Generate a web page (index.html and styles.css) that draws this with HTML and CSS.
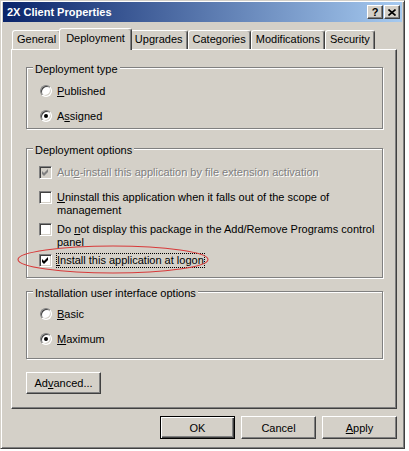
FILE: index.html
```html
<!DOCTYPE html>
<html>
    <head>
        <meta charset="utf-8">
        <title>2X Client Properties</title>
        <link rel="stylesheet" href="styles.css">
    </head>
    <body>
        <div class="window">
            <div class="titlebar">
                <span class="title">2X Client Properties</span>
                <div class="caption">
                    <span class="cbtn">?</span>
                    <span class="cbtn">
                        <svg width="8" height="7" viewBox="0 0 8 7"><path d="M0.5 0.5 L7.5 6.5 M7.5 0.5 L0.5 6.5" stroke="#000" stroke-width="1.6" fill="none"/></svg>
                    </span>
                </div>
            </div>
            <div class="content">
                <div class="tabs">
                    <div class="tab">General</div>
                    <div class="tab active">Deployment</div>
                    <div class="tab">Upgrades</div>
                    <div class="tab">Categories</div>
                    <div class="tab">Modifications</div>
                    <div class="tab">Security</div>
                </div>
                <div class="panel">
                    <div class="group g1">
                        <span class="legend">Deployment type</span>
                        <div class="opt first"><span class="radio"></span><span><u>P</u>ublished</span></div>
                        <div class="opt"><span class="radio on"></span><span>A<u>s</u>signed</span></div>
                    </div>
                    <div class="group g2">
                        <span class="legend">Deployment options</span>
                        <div class="opt first disabled">
                            <span class="check"><svg width="9" height="9" viewBox="0 0 9 9"><polygon points="1,3 3,5 7,1 7,4 3,8 1,6"/></svg></span>
                            <span>Aut<u>o</u>-install this application by file extension activation</span>
                        </div>
                        <div class="opt"><span class="check"></span><span><u>U</u>ninstall this application when it falls out of the scope of<br>management</span></div>
                        <div class="opt tight"><span class="check"></span><span>Do <u>n</u>ot display this package in the Add/Remove Programs control<br>panel</span></div>
                        <div class="opt tight">
                            <span class="check"><svg width="9" height="9" viewBox="0 0 9 9"><polygon points="1,3 3,5 7,1 7,4 3,8 1,6"/></svg></span>
                            <span class="focus"><u>I</u>nstall this application at logon</span>
                        </div>
                    </div>
                    <div class="group g3">
                        <span class="legend">Installation user interface options</span>
                        <div class="opt first"><span class="radio"></span><span><u>B</u>asic</span></div>
                        <div class="opt"><span class="radio on"></span><span><u>M</u>aximum</span></div>
                    </div>
                    <button class="btn advanced">Ad<u>v</u>anced...</button>
                </div>
                <div class="actions">
                    <button class="btn default">OK</button>
                    <button class="btn">Cancel</button>
                    <button class="btn"><u>A</u>pply</button>
                </div>
            </div>
            <!-- red highlight drawn over the dialog -->
            <svg class="mark" width="193" height="30" viewBox="0 0 193 30">
                <ellipse cx="96" cy="14.5" rx="95" ry="13.5" fill="none" stroke="#d83a3a" stroke-width="1.1"/>
            </svg>
        </div>
    </body>
</html>
```
FILE: styles.css
```css
*, ::after, ::before {
    box-sizing: border-box;
}
body {
    margin: 0;
    background: #fff;
    font-family: "Liberation Sans", Arial, sans-serif;
    font-size: 11px;
    color: #000;
}
.window {
    position: relative;
    width: 405px;
    height: 449px;
    padding: 1px 2px 2px 2px;
    background: #d4d0c8;
    border: 1px solid;
    border-color: #d4d0c8 #404040 #404040 #d4d0c8;
    box-shadow: inset 1px 1px #fff, inset -1px -1px #808080;
}
.titlebar {
    height: 20px;
    display: flex;
    align-items: center;
    justify-content: space-between;
    padding: 0 2px 0 4px;
    background: linear-gradient(to right, #0a246a, #a6caf0);
    color: #fff;
    font-weight: bold;
}
.caption {
    display: flex;
    gap: 1px;
}
.cbtn {
    width: 16px;
    height: 14px;
    display: flex;
    align-items: center;
    justify-content: center;
    background: #d4d0c8;
    color: #000;
    font-size: 11px;
    border: 1px solid;
    border-color: #fff #404040 #404040 #fff;
    box-shadow: inset -1px -1px #808080;
}
.content {
    padding: 6px 0 0 8px;
}
.tabs {
    display: flex;
    align-items: flex-end;
    height: 21px;
    padding-left: 1px;
}
.tab {
    height: 19px;
    padding: 0 4px;
    line-height: 17px;
    border: 1px solid;
    border-bottom: 0;
    border-color: #fff #404040 transparent #fff;
    box-shadow: inset -1px 0 #808080;
    border-radius: 3px 3px 0 0;
    white-space: nowrap;
}
.tab.active {
    position: relative;
    z-index: 1;
    height: 22px;
    margin: 0 -2px -1px -2px;
    padding: 0 6px;
    line-height: 18px;
    background: #d4d0c8;
}
.panel {
    width: 386px;
    height: 360px;
    padding: 0 13px 0 14px;
    border: 1px solid;
    border-color: #fff #404040 #404040 #fff;
    box-shadow: inset -1px -1px #808080;
}
.group {
    border: 1px solid #808080;
    box-shadow: inset 1px 1px #fff, 1px 1px #fff;
}
.legend {
    display: table;
    margin: -5px 0 0 6px;
    padding: 0 2px;
    line-height: 13px;
    background: #d4d0c8;
}
.g1 {
    margin-top: 17px;
    padding-bottom: 5px;
}
.g2 {
    margin-top: 19px;
    padding-bottom: 10px;
}
.g3 {
    margin-top: 13px;
    padding-bottom: 12px;
}
.opt {
    display: flex;
    align-items: flex-start;
    margin: 12px 0 0 12px;
    line-height: 13px;
    white-space: nowrap;
}
.g1 .opt.first {
    margin-top: 9px;
}
.g2 .opt.first {
    margin-top: 9px;
}
.g3 .opt.first {
    margin-top: 8px;
}
.opt.tight {
    margin-top: 6px;
}
.opt.tight + .opt.tight {
    margin-top: 5px;
}
.radio {
    flex: none;
    width: 12px;
    height: 12px;
    margin: 0 5px 0 1px;
    display: flex;
    align-items: center;
    justify-content: center;
    border-radius: 50%;
    background: #fff;
    border: 1px solid;
    border-color: #808080 #fff #fff #808080;
    box-shadow: inset 1px 1px #404040, inset -1px -1px #d4d0c8;
}
.radio.on::after {
    content: "";
    width: 4px;
    height: 4px;
    border-radius: 50%;
    background: #000;
}
.check {
    flex: none;
    width: 13px;
    height: 13px;
    margin-right: 5px;
    padding: 1px;
    background: #fff;
    border: 1px solid;
    border-color: #808080 #fff #fff #808080;
    box-shadow: inset 1px 1px #404040, inset -1px -1px #d4d0c8;
}
.check svg {
    display: block;
}
.opt.disabled {
    color: #808080;
    text-shadow: 1px 1px #fff;
}
.opt.disabled .check {
    background: #d4d0c8;
}
.opt.disabled polygon {
    fill: #808080;
}
.focus {
    outline: 1px dotted #000;
    outline-offset: 0;
}
.btn {
    display: flex;
    align-items: center;
    justify-content: center;
    width: 75px;
    height: 23px;
    padding: 0;
    font-family: inherit;
    font-size: 11px;
    color: #000;
    background: #d4d0c8;
    border: 1px solid;
    border-color: #fff #404040 #404040 #fff;
    box-shadow: inset -1px -1px #808080;
}
.btn.default {
    border-color: #000;
    box-shadow: inset 1px 1px #fff, inset -1px -1px #404040, inset -2px -2px #808080;
}
.advanced {
    height: 22px;
    margin-top: 13px;
}
.actions {
    width: 386px;
    display: flex;
    justify-content: flex-end;
    gap: 6px;
    margin-top: 7px;
}
.mark {
    position: absolute;
    left: 16px;
    top: 244px;
}
```
